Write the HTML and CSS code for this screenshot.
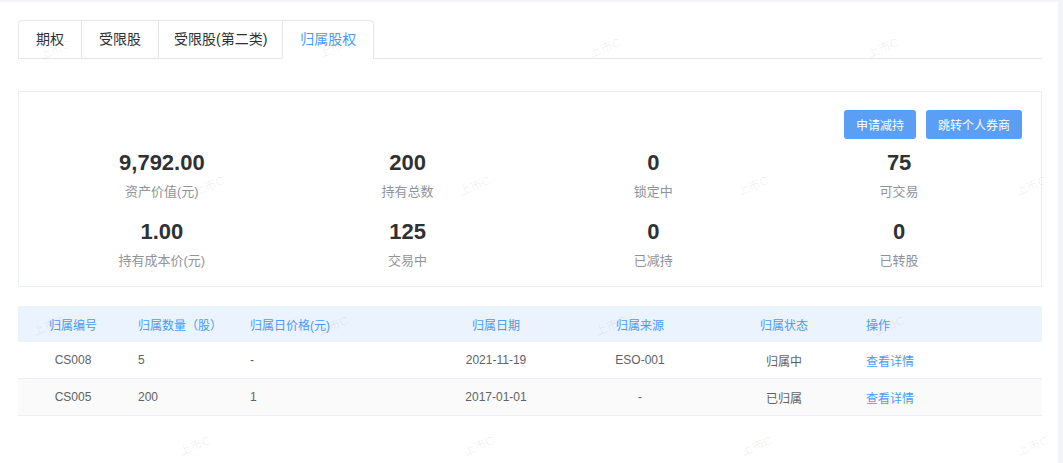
FILE: index.html
```html
<!DOCTYPE html>
<html lang="zh-CN">
<head>
    <meta charset="UTF-8">
    <meta name="viewport" content="width=device-width, initial-scale=1.0">
    <title>归属股权</title>
    <link rel="stylesheet" href="styles.css">
</head>
<body>
    <div id="page">
        <!-- tabs -->
        <div class="tabs">
            <ul class="tab-list">
                <li class="tab">期权</li>
                <li class="tab">受限股</li>
                <li class="tab tab-narrow">受限股(第二类)</li>
                <li class="tab active">归属股权</li>
            </ul>
        </div>

        <!-- summary card -->
        <div class="summary">
            <div class="summary-actions">
                <button class="btn">申请减持</button>
                <button class="btn">跳转个人券商</button>
            </div>
            <div class="stats">
                <div class="stat"><div class="stat-value">9,792.00</div><div class="stat-label">资产价值(元)</div></div>
                <div class="stat"><div class="stat-value">200</div><div class="stat-label">持有总数</div></div>
                <div class="stat"><div class="stat-value">0</div><div class="stat-label">锁定中</div></div>
                <div class="stat"><div class="stat-value">75</div><div class="stat-label">可交易</div></div>
                <div class="stat"><div class="stat-value">1.00</div><div class="stat-label">持有成本价(元)</div></div>
                <div class="stat"><div class="stat-value">125</div><div class="stat-label">交易中</div></div>
                <div class="stat"><div class="stat-value">0</div><div class="stat-label">已减持</div></div>
                <div class="stat"><div class="stat-value">0</div><div class="stat-label">已转股</div></div>
            </div>
        </div>

        <!-- vesting table -->
        <table class="vest-table">
            <colgroup>
                <col class="c-no">
                <col class="c-qty">
                <col class="c-price">
                <col class="c-date">
                <col class="c-src">
                <col class="c-status">
                <col class="c-op">
            </colgroup>
            <thead>
                <tr>
                    <th class="center">归属编号</th>
                    <th>归属数量（股）</th>
                    <th>归属日价格(元)</th>
                    <th class="center">归属日期</th>
                    <th class="center">归属来源</th>
                    <th class="center">归属状态</th>
                    <th>操作</th>
                </tr>
            </thead>
            <tbody>
                <tr>
                    <td class="center">CS008</td>
                    <td>5</td>
                    <td>-</td>
                    <td class="center">2021-11-19</td>
                    <td class="center">ESO-001</td>
                    <td class="center">归属中</td>
                    <td><a href="#" class="link">查看详情</a></td>
                </tr>
                <tr class="striped">
                    <td class="center">CS005</td>
                    <td>200</td>
                    <td>1</td>
                    <td class="center">2017-01-01</td>
                    <td class="center">-</td>
                    <td class="center">已归属</td>
                    <td><a href="#" class="link">查看详情</a></td>
                </tr>
            </tbody>
        </table>

        <!-- watermark layer -->
        <div class="watermarks">
            <span class="wm" style="left:38px;top:38px">上市C</span>
            <span class="wm" style="left:318px;top:36px">上市C</span>
            <span class="wm" style="left:588px;top:36px">上市C</span>
            <span class="wm" style="left:866px;top:36px">上市C</span>
            <span class="wm" style="left:192px;top:174px">上市C</span>
            <span class="wm" style="left:458px;top:174px">上市C</span>
            <span class="wm" style="left:736px;top:174px">上市C</span>
            <span class="wm" style="left:1014px;top:174px">上市C</span>
            <span class="wm" style="left:32px;top:314px">上市C</span>
            <span class="wm" style="left:316px;top:314px">上市C</span>
            <span class="wm" style="left:594px;top:314px">上市C</span>
            <span class="wm" style="left:872px;top:314px">上市C</span>
            <span class="wm" style="left:178px;top:434px">上市C</span>
            <span class="wm" style="left:462px;top:434px">上市C</span>
            <span class="wm" style="left:740px;top:434px">上市C</span>
            <span class="wm" style="left:1016px;top:434px">上市C</span>
        </div>
    </div>
</body>
</html>
```

FILE: styles.css
```css
/* General */
html, body {
    margin: 0;
    padding: 0;
    height: 100%;
    background: #f3f4f8;
    font-family: "Liberation Sans", Arial, "Noto Sans CJK SC", sans-serif;
    color: #303133;
}

#page {
    position: relative;
    width: 1058px;
    min-height: 461px;
    margin-top: 2px;
    padding: 18px 16px 0 18px;
    box-sizing: border-box;
    background: #fff;
}

/* Tabs */
.tabs {
    border-bottom: 1px solid #e4e7ed;
    margin-bottom: 32px;
}

.tab-list {
    list-style: none;
    margin: 0;
    padding: 0;
    display: inline-flex;
    border: 1px solid #e4e7ed;
    border-bottom: none;
    border-radius: 4px 4px 0 0;
    margin-bottom: -1px;
}

.tab {
    height: 37px;
    line-height: 37px;
    padding: 0 17px;
    font-size: 14px;
    color: #303133;
    border-left: 1px solid #e4e7ed;
    border-bottom: 1px solid #e4e7ed;
}

.tab:first-child {
    border-left: none;
}

.tab-narrow {
    padding: 0 15px;
}

.tab.active {
    color: #4b9af7;
    border-bottom-color: #fff;
}

/* Summary card */
.summary {
    border: 1px solid #ebeef5;
    padding: 18px 19px 15px 20px;
    margin-bottom: 19px;
}

.summary-actions {
    display: flex;
    justify-content: flex-end;
    gap: 10px;
    margin-bottom: 10px;
}

.btn {
    height: 29px;
    padding: 0 12px;
    border: none;
    border-radius: 3px;
    background: #5a9ef6;
    color: #fff;
    font-size: 12px;
    font-family: inherit;
}

.stats {
    display: grid;
    grid-template-columns: repeat(4, 1fr);
    row-gap: 16px;
}

.stat {
    text-align: center;
}

.stat-value {
    font-size: 22px;
    font-weight: bold;
    line-height: 28px;
    color: #303133;
}

.stat-label {
    margin-top: 5px;
    font-size: 13px;
    line-height: 20px;
    color: #909399;
}

/* Table */
.vest-table {
    width: 1024px;
    border-collapse: collapse;
    table-layout: fixed;
    font-size: 12px;
}

.c-no { width: 110px; }
.c-qty { width: 112px; }
.c-price { width: 184px; }
.c-date { width: 144px; }
.c-src { width: 144px; }
.c-status { width: 144px; }
.c-op { width: 186px; }

.vest-table th {
    height: 36px;
    padding: 0 10px;
    background: #eaf3fe;
    color: #4b9af7;
    font-weight: normal;
    text-align: left;
}

.vest-table td {
    height: 36px;
    padding: 0 10px;
    color: #606266;
    border-bottom: 1px solid #ebeef5;
}

.vest-table .center {
    text-align: center;
}

.vest-table tr.striped td {
    background: #fafafa;
}

.link {
    color: #4b9af7;
    text-decoration: none;
}

/* Watermark overlay */
.watermarks {
    position: absolute;
    inset: 0;
    pointer-events: none;
}

.wm {
    position: absolute;
    font-size: 12px;
    color: rgba(0, 0, 0, 0.07);
    transform: rotate(-22deg);
    white-space: nowrap;
}
```
